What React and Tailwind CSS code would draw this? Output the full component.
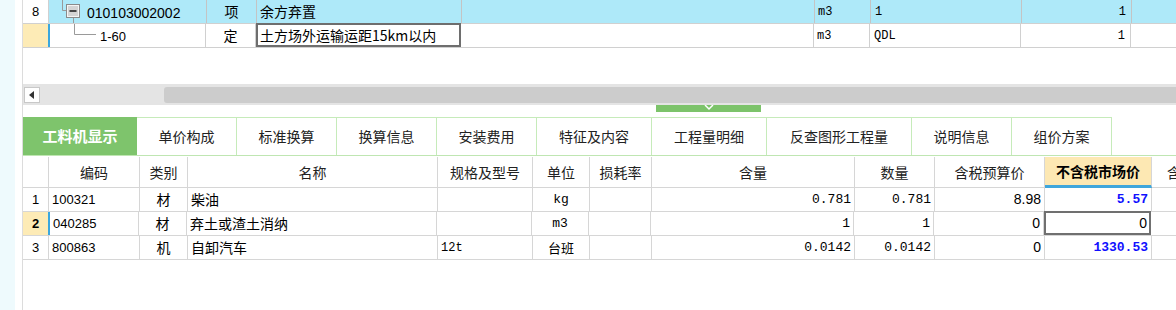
import React from 'react';

const cjk = { fontFamily: '"Noto Sans CJK SC", "Noto Sans", sans-serif' };
const mono = { fontFamily: '"Liberation Mono", "DejaVu Sans Mono", monospace' };
const sans = { fontFamily: '"Liberation Sans", Arial, sans-serif' };

const tabs = [
    { label: '单价构成', w: 'w-[100px]' },
    { label: '标准换算', w: 'w-[100px]' },
    { label: '换算信息', w: 'w-[100px]' },
    { label: '安装费用', w: 'w-[100px]' },
    { label: '特征及内容', w: 'w-[115px]' },
    { label: '工程量明细', w: 'w-[115px]' },
    { label: '反查图形工程量', w: 'w-[145px]' },
    { label: '说明信息', w: 'w-[100px]' },
    { label: '组价方案', w: 'w-[100px]' },
];

const rows = [
    { n: '1', code: '100321', type: '材', name: '柴油', spec: '', unit: 'kg', unitMono: true, qty: '0.781', amount: '0.781', budget: '8.98', market: '5.57' },
    { n: '2', code: '040285', type: '材', name: '弃土或渣土消纳', spec: '', unit: 'm3', unitMono: true, qty: '1', amount: '1', budget: '0', market: '0', active: true },
    { n: '3', code: '800863', type: '机', name: '自卸汽车', spec: '12t', unit: '台班', unitMono: false, qty: '0.0142', amount: '0.0142', budget: '0', market: '1330.53' },
];

function TreeRow1() {
    return (
        <svg width="158" height="23" className="absolute left-0 top-0">
            <path d="M13.5 0 V10.5 H17" stroke="#9a9a9a" fill="none" />
            <path d="M24.5 17 V23" stroke="#9a9a9a" fill="none" />
            <rect x="17.5" y="4.5" width="13" height="13" fill="#e8e8e8" stroke="#8a8a8a" />
            <rect x="18.5" y="5.5" width="11" height="11" fill="#d4d4d4" stroke="#f4f4f4" />
            <path d="M20.5 11 H27.5" stroke="#222" strokeWidth="1.6" />
        </svg>
    );
}

function TreeRow2() {
    return (
        <svg width="158" height="23" className="absolute left-0 top-0">
            <path d="M24.5 0 V10.5 H46" stroke="#9a9a9a" fill="none" />
        </svg>
    );
}

export default function App() {
    return (
        <div className="w-[1176px] h-[310px] bg-white flex overflow-hidden text-black">
            <div className="w-[15px] h-full bg-[#eefafd]"></div>
            <div className="w-[7px] h-full bg-white"></div>
            <div className="flex-1 h-full border-l border-[#dcdcdc] flex flex-col min-w-0">
                {/* upper grid */}
                <div className="flex h-[24px] border-b border-[#d0d0d0] text-[13px]">
                    <div className="w-[26px] shrink-0 bg-white border-r border-[#d0d0d0] flex items-center justify-center text-[13px]" style={sans}>8</div>
                    <div className="flex-1 flex bg-[#aee9f9]">
                        <div className="w-[158px] shrink-0 relative border-r border-[#c4c4c4]">
                            <TreeRow1 />
                            <span className="absolute left-[38px] top-[3px] text-[14px]" style={sans}>010103002002</span>
                        </div>
                        <div className="w-[50px] shrink-0 border-r border-[#c4c4c4] flex items-center justify-center text-[14px]" style={cjk}>项</div>
                        <div className="w-[205px] shrink-0 border-r border-[#c4c4c4] flex items-center pl-[3px] text-[14px]" style={cjk}>余方弃置</div>
                        <div className="w-[353px] shrink-0 border-r border-[#c4c4c4]"></div>
                        <div className="w-[56px] shrink-0 border-r border-[#c4c4c4] flex items-center pl-[3px] text-[12px]" style={mono}>m3</div>
                        <div className="w-[151px] shrink-0 border-r border-[#c4c4c4] flex items-center pl-[4px] text-[12px]" style={mono}>1</div>
                        <div className="w-[110px] shrink-0 border-r border-[#c4c4c4] flex items-center justify-end pr-[5px] text-[12px]" style={mono}>1</div>
                        <div className="flex-1"></div>
                    </div>
                </div>
                <div className="flex h-[24px] border-b border-[#d0d0d0] text-[13px]">
                    <div className="w-[26px] shrink-0 bg-[#fdebb6] border-r border-[#d0d0d0]"></div>
                    <div className="w-[158px] shrink-0 relative border-r border-[#d0d0d0] border-l-2 border-l-[#3ba7de] -ml-[1px]">
                        <TreeRow2 />
                        <span className="absolute left-[50px] top-[3px] text-[13px]" style={sans}>1-60</span>
                    </div>
                    <div className="w-[50px] shrink-0 border-r border-[#d0d0d0] flex items-center justify-center text-[14px]" style={cjk}>定</div>
                    <div className="w-[205px] shrink-0 border-2 border-[#6e6e6e] -mt-[1px] h-[24px] flex items-center pl-[2px] text-[14px]" style={cjk}>土方场外运输运距15km以内</div>
                    <div className="w-[353px] shrink-0 border-r border-[#d0d0d0]"></div>
                    <div className="w-[56px] shrink-0 border-r border-[#d0d0d0] flex items-center pl-[3px] text-[12px]" style={mono}>m3</div>
                    <div className="w-[151px] shrink-0 border-r border-[#d0d0d0] flex items-center pl-[4px] text-[12px]" style={mono}>QDL</div>
                    <div className="w-[110px] shrink-0 border-r border-[#d0d0d0] flex items-center justify-end pr-[5px] text-[12px]" style={mono}>1</div>
                    <div className="flex-1"></div>
                </div>

                <div className="h-[36px] shrink-0"></div>

                {/* horizontal scrollbar */}
                <div className="h-[21px] shrink-0 bg-[#e4e4e4] flex items-center">
                    <div className="w-[16px] h-[16px] ml-[1px] bg-white border border-[#c8c8c8] flex items-center justify-center">
                        <svg width="6" height="8" viewBox="0 0 6 8"><path d="M5 0 V8 L0 4 Z" fill="#333" /></svg>
                    </div>
                    <div className="flex-1 h-[16px] ml-[124px] bg-[#cccccc] rounded-l-[3px]"></div>
                </div>

                {/* splitter handle */}
                <div className="h-[12px] shrink-0 flex items-start">
                    <div className="ml-[633px] w-[105px] h-[7px] bg-[#7cc36a] flex justify-center">
                        <svg width="12" height="6" viewBox="0 0 12 6"><path d="M2 0 L6 4 L10 0" stroke="#fff" strokeWidth="1.5" fill="none" /></svg>
                    </div>
                </div>

                {/* tabs */}
                <div className="h-[39px] shrink-0 flex border-b border-[#bfe6b2]" style={cjk}>
                    <div className="w-[114px] bg-[#7ec46c] text-white text-[15px] font-bold flex items-center justify-center">工料机显示</div>
                    {tabs.map((t) => (
                        <div key={t.label} className={`${t.w} shrink-0 border-t border-r border-[#c6ebba] bg-white text-[14px] text-[#222] flex items-center justify-center`}>{t.label}</div>
                    ))}
                </div>

                <div className="h-[1px] shrink-0"></div>

                {/* lower grid header */}
                <div className="flex h-[31px] shrink-0 border-b border-[#d6d6d6] text-[14px] text-[#222]" style={cjk}>
                    <div className="w-[26px] shrink-0 border-r border-[#d6d6d6]"></div>
                    <div className="w-[91px] shrink-0 border-r border-[#d6d6d6] flex items-center justify-center">编码</div>
                    <div className="w-[48px] shrink-0 border-r border-[#d6d6d6] flex items-center justify-center">类别</div>
                    <div className="w-[250px] shrink-0 border-r border-[#d6d6d6] flex items-center justify-center">名称</div>
                    <div className="w-[95px] shrink-0 border-r border-[#d6d6d6] flex items-center justify-center">规格及型号</div>
                    <div className="w-[57px] shrink-0 border-r border-[#d6d6d6] flex items-center justify-center">单位</div>
                    <div className="w-[62px] shrink-0 border-r border-[#d6d6d6] flex items-center justify-center">损耗率</div>
                    <div className="w-[203px] shrink-0 border-r border-[#d6d6d6] flex items-center justify-center">含量</div>
                    <div className="w-[80px] shrink-0 border-r border-[#d6d6d6] flex items-center justify-center">数量</div>
                    <div className="w-[110px] shrink-0 border-r border-[#d6d6d6] flex items-center justify-center">含税预算价</div>
                    <div className="w-[107px] shrink-0 border-r border-[#d6d6d6] bg-[#fde8b3] border-b-[3px] border-b-[#3fa6dc] -mb-[1px] flex items-center justify-center font-bold text-black">不含税市场价</div>
                    <div className="flex-1 flex items-center pl-[15px] overflow-hidden whitespace-nowrap">含税市场价</div>
                </div>

                {rows.map((r) => (
                    <div key={r.n} className="flex h-[24px] shrink-0 border-b border-[#d6d6d6] text-[13px]">
                        <div className={`w-[26px] shrink-0 border-r border-[#d6d6d6] flex items-center justify-center text-[13px] ${r.active ? 'bg-[#fdebb6] font-bold' : ''}`} style={sans}>{r.n}</div>
                        <div className={`w-[91px] shrink-0 border-r border-[#d6d6d6] flex items-center pl-[3px] text-[13px] ${r.active ? 'border-l-2 border-l-[#3ba7de] -ml-[1px]' : ''}`} style={sans}>{r.code}</div>
                        <div className="w-[48px] shrink-0 border-r border-[#d6d6d6] flex items-center justify-center text-[14px]" style={cjk}>{r.type}</div>
                        <div className="w-[250px] shrink-0 border-r border-[#d6d6d6] flex items-center pl-[3px] text-[14px]" style={cjk}>{r.name}</div>
                        <div className="w-[95px] shrink-0 border-r border-[#d6d6d6] flex items-center pl-[3px] text-[12px]" style={mono}>{r.spec}</div>
                        <div className="w-[57px] shrink-0 border-r border-[#d6d6d6] flex items-center justify-center text-[13px]" style={r.unitMono ? mono : cjk}>{r.unit}</div>
                        <div className="w-[62px] shrink-0 border-r border-[#d6d6d6]"></div>
                        <div className="w-[203px] shrink-0 border-r border-[#d6d6d6] flex items-center justify-end pr-[3px] text-[13px]" style={mono}>{r.qty}</div>
                        <div className="w-[80px] shrink-0 border-r border-[#d6d6d6] flex items-center justify-end pr-[3px] text-[13px]" style={mono}>{r.amount}</div>
                        <div className="w-[110px] shrink-0 border-r border-[#d6d6d6] flex items-center justify-end pr-[3px] text-[14px]" style={sans}>{r.budget}</div>
                        {r.active ? (
                            <div className="w-[107px] shrink-0 border-2 border-[#707070] -mt-[1px] h-[24px] flex items-center justify-end pr-[2px] text-[14px]" style={sans}>{r.market}</div>
                        ) : (
                            <div className="w-[107px] shrink-0 border-r border-[#d6d6d6] flex items-center justify-end pr-[3px] text-[13px] font-bold text-[#1010ff]" style={mono}>{r.market}</div>
                        )}
                        <div className="flex-1"></div>
                    </div>
                ))}

                <div className="flex-1"></div>
            </div>
        </div>
    );
}
